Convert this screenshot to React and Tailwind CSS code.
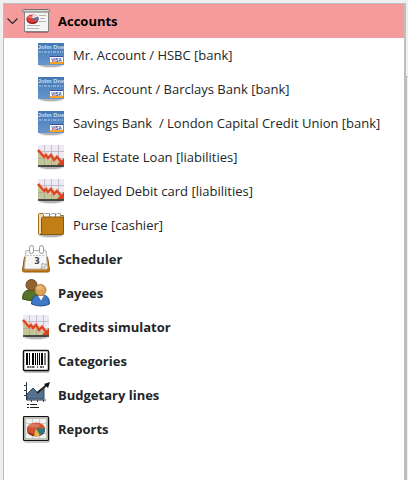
import React, { useState } from "react";

function Shadow({ y = 24 }) {
  return (
    <g fill="#000">
      <ellipse cx="14" cy={y} rx="13" ry="3" opacity=".1" />
      <ellipse cx="14" cy={y} rx="11" ry="2" opacity=".22" />
    </g>
  );
}

function Icon({ children }) {
  return (
    <svg viewBox="0 0 28 28" className="size-7 shrink-0" aria-hidden="true">
      {children}
    </svg>
  );
}

function BoardIcon() {
  return (
    <Icon>
      <path d="M4 25.500h22" stroke="#6d4545" opacity=".5" />
      <rect x="2.500" y="4.500" width="24" height="20" fill="#f4f4f2" stroke="#858585" />
      <rect x=".500" y="2.500" width="27" height="2.500" rx="1" fill="#d8d8d5" stroke="#6f6f6f" />
      <path d="M17 8.500h7M18 11.500h5M17 14.500h7M5 18.500h13M5 21.500h12" stroke="#b5b5b5" />
      <ellipse cx="10.500" cy="12.500" rx="6" ry="4.500" fill="#8e1818" />
      <ellipse cx="10.500" cy="11.500" rx="6" ry="4" fill="#e03a32" />
      <path d="M10.500 11.500V7.500a6 4 0 0 1 5.500 2.500z" fill="#e2e6ee" />
      <path d="M10.500 11.500l5.500-1.500a6 4 0 0 1-1.500 4.500z" fill="#4b79ad" />
      <ellipse cx="9" cy="10" rx="3" ry="1.200" fill="#fff" opacity=".3" />
    </Icon>
  );
}

function CardIcon() {
  return (
    <Icon>
      <Shadow y={24} />
      <defs>
        <linearGradient id="card-blue" x1="0" y1="0" x2="0" y2="1">
          <stop offset="0" stopColor="#4477b3" />
          <stop offset="1" stopColor="#6596cd" />
        </linearGradient>
      </defs>
      <rect x="1" y="2" width="26" height="22" fill="url(#card-blue)" />
      <text x="14" y="7.500" textAnchor="middle" fontSize="5.800" fontWeight="700" fill="#c9e0f6" fontFamily="Liberation Sans, sans-serif">John Doe</text>
      <path d="M2 11h24" stroke="#a3c5e8" strokeWidth="2" strokeDasharray="2 1 1 1 3 1" opacity=".65" />
      <rect x="13" y="15" width="13" height="8" fill="#fff" />
      <path d="M13 15.500h13" stroke="#3c4b9e" />
      <path d="M13 22h13" stroke="#f5a227" strokeWidth="2" />
      <text x="19.500" y="20.500" textAnchor="middle" fontSize="4.500" fontWeight="700" fill="#2d3a93" fontFamily="Liberation Sans, sans-serif">VISA</text>
    </Icon>
  );
}

function LossIcon() {
  return (
    <Icon>
      <Shadow y={24} />
      <rect x="1" y="2" width="26" height="21" fill="#eeeaf5" />
      <path d="M1 9l5 6 3-2 4 4 4-4 5 7 5 0v3H1z" fill="#c3c797" />
      <path d="M1 8.500h26M1 15.500h26M7.500 2v21M14.500 2v21M21.500 2v21" stroke="#92909a" strokeWidth=".8" opacity=".6" />
      <path d="M1 23h26" stroke="#222" strokeWidth="1.500" />
      <path d="M1 7l6 7 2-2 2 3 3-3 3 5 3-3 5 6" fill="none" stroke="#f2a284" strokeWidth="4" opacity=".6" />
      <path d="M1 7l6 7 2-2 2 3 3-3 3 5 3-3 5 6" fill="none" stroke="#d9441f" strokeWidth="2.200" />
      <path d="M27 15v7h-7z" fill="#d9441f" />
    </Icon>
  );
}

function FolderIcon() {
  return (
    <Icon>
      <Shadow y={24} />
      <path d="M1.500 22.500V3.500q0-1 1-1H6l1 2h19.500v18q0 1-1 1h-23q-1 0-1-1z" fill="#f1dcb8" stroke="#a06b1a" />
      <path d="M6.500 7V3.500l1-1h5l1 1 1-1h4l1 1 1-1h3V7z" fill="#fafafa" stroke="#929292" strokeWidth=".8" />
      <path d="M12.500 3v3M18.500 3v3" stroke="#888" />
      <path d="M4.500 8q0-2 1.500-2h19q1.500 0 1.500 2v13.500q0 2-1.500 2H3q1.500-.500 1.500-2z" fill="#c17d16" stroke="#8b5708" />
    </Icon>
  );
}

function CalendarIcon() {
  return (
    <Icon>
      <path d="M2.500 12h23l2 13q0 2-1.500 2H2q-1.500 0-1.500-2z" fill="#c37a1b" stroke="#935712" />
      <path d="M4 5.500h20l1.500 17q0 1.500-1 1.500h-21q-1 0-1-1.500z" fill="#f7f7f5" stroke="#b5b5b2" />
      <path d="M5 10.500h17" stroke="#c5c5c2" strokeDasharray="2 1" />
      <g fill="#fff" stroke="#999996">
        <rect x="7.500" y=".500" width="4" height="8" rx="2" />
        <rect x="17.500" y=".500" width="4" height="8" rx="2" />
      </g>
      <text x="15" y="19" textAnchor="middle" fontSize="8" fill="#444" fontFamily="DejaVu Sans, sans-serif">3</text>
      <path d="M19 23.500l1-5 5 1q-1 3-6 4z" fill="#e3e3e1" stroke="#999" strokeWidth=".700" />
    </Icon>
  );
}

function PeopleIcon() {
  return (
    <Icon>
      <path d="M.500 20q0-9 7-9h3q7 0 7 9-7 3-17 0z" fill="#557329" stroke="#37500f" />
      <circle cx="9.500" cy="6" r="5.500" fill="#8f6430" stroke="#6a461c" />
      <path d="M9.500 25q0-9 7-9h4q7 0 7 9-8 4-18 0z" fill="#3f78c6" stroke="#214f88" />
      <path d="M16 16.500h6l-3 5z" fill="#fff" />
      <circle cx="18.500" cy="11" r="5.500" fill="#dda356" stroke="#b57b35" />
      <ellipse cx="17.500" cy="8.500" rx="3" ry="2" fill="#fff" opacity=".25" />
    </Icon>
  );
}

function BarcodeIcon() {
  return (
    <Icon>
      <rect x="2" y="5" width="26" height="21" rx="2" fill="#777" opacity=".45" />
      <rect x="1.500" y="3.500" width="25" height="20" rx="1" fill="#fff" stroke="#111" strokeWidth="1.500" />
      <path d="M5 6v12M11 6v12M20 6v12" stroke="#000" strokeWidth="2" />
      <path d="M7.500 6v12M13.500 6v12M15.500 6v12M17.500 6v12M23 6v12" stroke="#000" />
      <path d="M5 20h8M15 20h1M18 20h4" stroke="#333" strokeWidth="1.500" strokeDasharray="2 .500" />
    </Icon>
  );
}

function TrendIcon() {
  return (
    <Icon>
      <path d="M5 18v-5l6-6 5 5 6-6v12z" fill="#54728f" stroke="#304b64" />
      <path d="M4.500 1v18H24M2 4.500h2M2 9.500h2M2 14.500h2M9.500 19v2M15.500 19v2M21.500 19v2" fill="none" stroke="#26384a" />
      <path d="M15 12L26 3" stroke="#222" strokeWidth="2" />
      <path d="M28 1l-2 6-4-4z" fill="#111" />
      <path d="M5 23.500h2M5 26.500h2M8 23.500h7M8 26.500h9" stroke="#222" />
    </Icon>
  );
}

function ReportIcon() {
  return (
    <Icon>
      <rect x="2" y="3" width="26" height="25" rx="2" fill="#777" opacity=".4" />
      <rect x="1.500" y="1.500" width="25" height="24" rx="1" fill="#bdc1b9" stroke="#111" strokeWidth="1.200" />
      <rect x="4" y="4" width="20" height="19" fill="#f2f2f0" />
      <path d="M4 8.500h20M4 13.500h20M4 18.500h20M10.500 4v19M17.500 4v19" stroke="#ccc" />
      <ellipse cx="14" cy="15.500" rx="9" ry="6" fill="#8a2d18" />
      <ellipse cx="14" cy="13.500" rx="9" ry="6" fill="#cf5333" />
      <path d="M14 13.500l9 0v2q-1 4-5 5z" fill="#2f7580" />
      <path d="M14 13.500l4 7q-3 1-6 .500z" fill="#e3bc3f" />
      <ellipse cx="12" cy="10.500" rx="6" ry="2" fill="#fff" opacity=".22" />
    </Icon>
  );
}

const accounts = [
  ["Mr. Account / HSBC [bank]", CardIcon],
  ["Mrs. Account / Barclays Bank [bank]", CardIcon],
  ["Savings Bank\u00a0 / London Capital Credit Union [bank]", CardIcon],
  ["Real Estate Loan [liabilities]", LossIcon],
  ["Delayed Debit card [liabilities]", LossIcon],
  ["Purse [cashier]", FolderIcon],
];

const sections = [
  ["Scheduler", CalendarIcon],
  ["Payees", PeopleIcon],
  ["Credits simulator", LossIcon],
  ["Categories", BarcodeIcon],
  ["Budgetary lines", TrendIcon],
  ["Reports", ReportIcon],
];

export default function App() {
  const [open, setOpen] = useState(true);
  return (
    <div className="flex min-h-screen bg-[#efefef] pt-[3px] pl-[3px] font-['Open_Sans','Noto_Sans',sans-serif] text-[13px] leading-5 text-[#232629]">
      <nav aria-label="Navigation" className="min-w-0 flex-1 border-t border-r-2 border-l border-[#bcbebf] bg-white">
        <button
          type="button"
          aria-expanded={open}
          onClick={() => setOpen(!open)}
          className="flex h-[34px] w-full items-center bg-[#f69b9b] text-left font-bold text-black"
        >
          <svg viewBox="0 0 18 16" className={open ? "h-4 w-[18px] shrink-0" : "h-4 w-[18px] shrink-0 -rotate-90"} aria-hidden="true">
            <path d="M3.500 5.500l5 5 5-5" fill="none" stroke="#232629" strokeWidth="1.200" />
          </svg>
          <BoardIcon />
          <span className="pl-2">Accounts</span>
        </button>
        {open && (
          <ul>
            {accounts.map(([name, Glyph]) => (
              <li key={name}>
                <button type="button" className="flex h-[34px] w-full items-center gap-2 pl-[33px] text-left whitespace-nowrap">
                  <Glyph />
                  <span>{name}</span>
                </button>
              </li>
            ))}
          </ul>
        )}
        <ul>
          {sections.map(([name, Glyph]) => (
            <li key={name}>
              <button type="button" className="flex h-[34px] w-full items-center gap-2 pl-[18px] text-left font-bold whitespace-nowrap">
                <Glyph />
                <span>{name}</span>
              </button>
            </li>
          ))}
        </ul>
      </nav>
      <div className="flex w-[2px] flex-col">
        <div className="h-[73px]" />
        <div className="flex-1 border-t border-l border-[#bcbebf]" />
      </div>
    </div>
  );
}
